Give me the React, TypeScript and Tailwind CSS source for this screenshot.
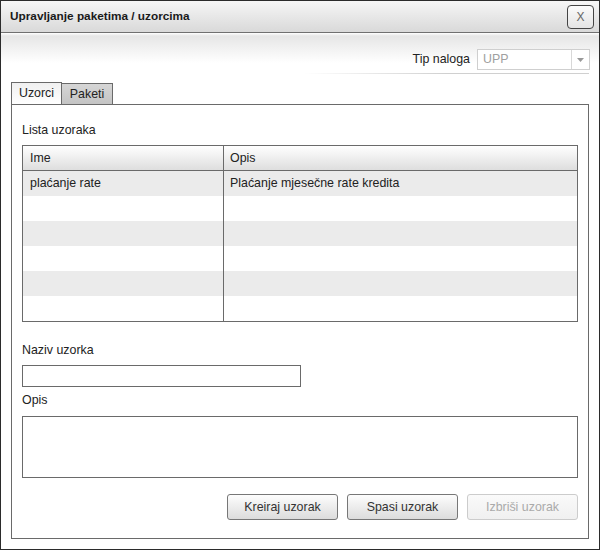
import React from "react";

const rows = [
  { ime: "plaćanje rate", opis: "Plaćanje mjesečne rate kredita" },
  { ime: "", opis: "" },
  { ime: "", opis: "" },
  { ime: "", opis: "" },
  { ime: "", opis: "" },
  { ime: "", opis: "" },
];

export default function App() {
  return (
    <div className="w-[600px] h-[550px] bg-white border border-[#2b2b2b] font-['Liberation_Sans',Arial,sans-serif] text-[12.4px] text-[#222] flex flex-col overflow-hidden">
      {/* Title bar */}
      <div className="h-[32px] shrink-0 border-b border-[#707070] bg-gradient-to-b from-[#f6f6f6] to-[#d9d9d9] flex items-center justify-between pl-[9px] pr-[5px]">
        <span className="font-bold text-[11.8px] text-[#1a1a1a]">Upravljanje paketima / uzorcima</span>
        <button className="w-[27px] h-[24px] border border-[#444] rounded-[4px] bg-gradient-to-b from-[#fbfbfb] to-[#e4e4e4] text-[#666] text-[12px] leading-none flex items-center justify-center">
          X
        </button>
      </div>
      {/* Body */}
      <div className="flex-1 flex flex-col bg-[linear-gradient(to_bottom,#ffffff_0px,#e6e6e6_3px,#ffffff_30px)]">
        <div className="flex justify-end items-center pt-[16px] pr-[9px] gap-[7px]">
          <span className="text-[#222]">Tip naloga</span>
          <div className="w-[113px] h-[21px] border border-[#cfcfcf] bg-white flex items-stretch">
            <span className="flex-1 text-[#a0a0a0] pl-[5px] leading-[19px]">UPP</span>
            <span className="w-[18px] border-l border-[#d8d8d8] flex items-center justify-center">
              <svg width="7" height="4" viewBox="0 0 7 4">
                <path d="M0 0 L7 0 L3.5 4 Z" fill="#999" />
              </svg>
            </span>
          </div>
        </div>
        <div className="mt-[3px] mr-[10px] ml-auto w-[285px] h-px bg-gradient-to-r from-transparent via-[#d0d0d0] to-[#d0d0d0]" />
        {/* Tabs */}
        <div className="mx-[10px] mt-[8px] flex items-end">
          <div className="w-[51px] h-[22px] border border-b-0 border-[#6a6a6a] bg-gradient-to-b from-[#f0f0f0] to-white flex items-center justify-center text-[#222]">
            Uzorci
          </div>
          <div className="w-[51px] h-[21px] border border-l-0 border-b-0 border-[#6a6a6a] bg-gradient-to-b from-[#d6d6d6] to-[#c4c4c4] flex items-center justify-center text-[#222]">
            Paketi
          </div>
        </div>
        {/* Panel */}
        <div className="mx-[10px] h-[435px] border border-[#6a6a6a] px-[10px] pt-[17px] flex flex-col">
          <div className="h-[16px] leading-[16px]">Lista uzoraka</div>
          <div className="mt-[7px] border border-[#6a6a6a]">
            <div className="h-[25px] flex border-b border-[#6a6a6a] bg-gradient-to-b from-white to-[#dedede]">
              <div className="w-[201px] border-r border-[#6a6a6a] pl-[7px] leading-[24px]">Ime</div>
              <div className="flex-1 pl-[6px] leading-[24px]">Opis</div>
            </div>
            {rows.map((r, i) => (
              <div key={i} className={`h-[25px] flex ${i % 2 === 0 ? "bg-[#ebebeb]" : "bg-white"}`}>
                <div className="w-[201px] border-r border-[#6a6a6a] pl-[7px] leading-[25px]">{r.ime}</div>
                <div className="flex-1 pl-[6px] leading-[25px]">{r.opis}</div>
              </div>
            ))}
          </div>
          <div className="mt-[20px] h-[16px] leading-[16px]">Naziv uzorka</div>
          <div className="mt-[7px] w-[279px] h-[22px] border border-[#6a6a6a] bg-white" />
          <div className="mt-[5px] h-[16px] leading-[16px]">Opis</div>
          <div className="mt-[8px] h-[62px] border border-[#6a6a6a] bg-white" />
          <div className="mt-[16px] flex justify-end gap-[9px]">
            <button className="w-[111px] h-[26px] border border-[#777] rounded-[3px] bg-gradient-to-b from-[#fdfdfd] to-[#dcdcdc] text-[#333]">
              Kreiraj uzorak
            </button>
            <button className="w-[111px] h-[26px] border border-[#777] rounded-[3px] bg-gradient-to-b from-[#fdfdfd] to-[#dcdcdc] text-[#333]">
              Spasi uzorak
            </button>
            <button className="w-[111px] h-[26px] border border-[#cccccc] rounded-[3px] bg-gradient-to-b from-[#fafafa] to-[#f0f0f0] text-[#aaa]">
              Izbriši uzorak
            </button>
          </div>
        </div>
      </div>
    </div>
  );
}
